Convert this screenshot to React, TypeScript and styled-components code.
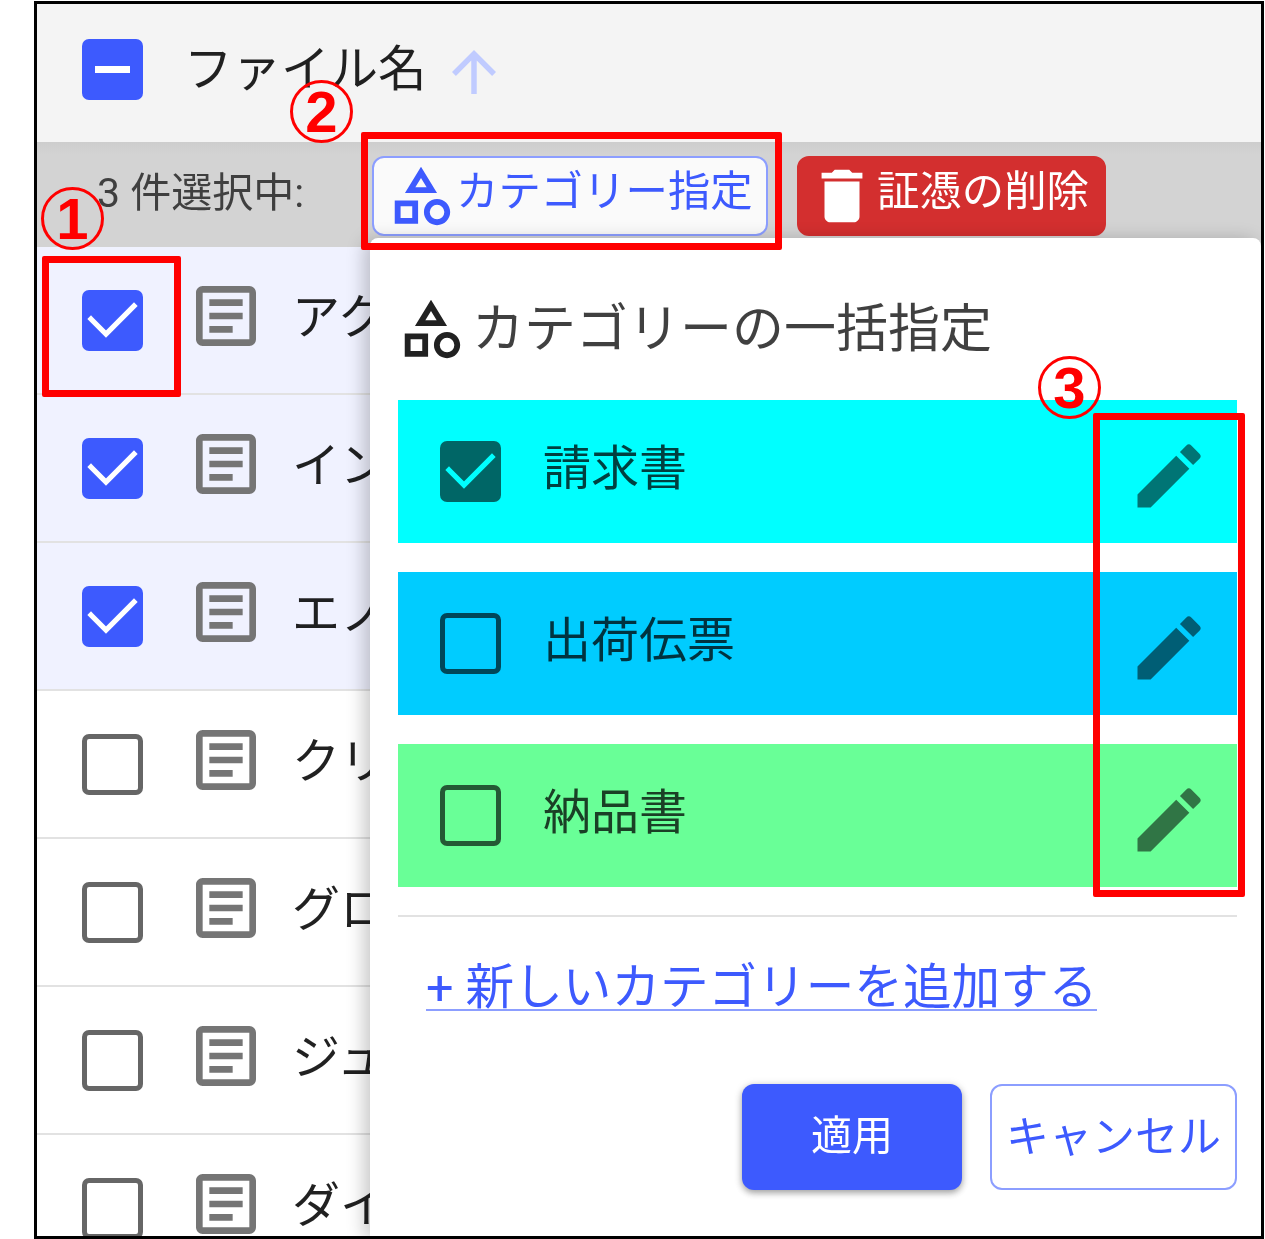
import React from 'react';
import styled, { createGlobalStyle } from 'styled-components';
import {
  MdArrowUpward,
  MdDelete,
  MdEdit,
  MdOutlineArticle,
  MdOutlineCategory,
} from 'react-icons/md';

const BLUE = '#3d5afe';
const FONT = `Roboto, "Noto Sans CJK JP", sans-serif`;

const GlobalStyle = createGlobalStyle`
  html, body {
    margin: 0;
    background: #fff;
    font-family: ${FONT};
  }
`;

const files = [
  { name: 'アクメ株式会社', selected: true },
  { name: 'インター商事', selected: true },
  { name: 'エノモト物産', selected: true },
  { name: 'クリエイト', selected: false },
  { name: 'グローバル', selected: false },
  { name: 'ジュピター', selected: false },
  { name: 'ダイヤ工業', selected: false },
];

const categories = [
  { name: '請求書', color: '#00ffff', checked: true },
  { name: '出荷伝票', color: '#00ccff', checked: false },
  { name: '納品書', color: '#69ff97', checked: false },
];

const Frame = styled.div`
  position: relative;
  box-sizing: border-box;
  width: 1230px;
  height: 1238px;
  margin: 1px 0 0 34px;
  border: 3px solid #000;
  overflow: hidden;
`;

const Sheet = styled.div`
  position: relative;
  height: 100%;
  filter: blur(0.55px);
  color: rgba(0, 0, 0, 0.87);
`;

const HeaderRow = styled.div`
  box-sizing: border-box;
  display: flex;
  align-items: center;
  height: 138px;
  padding: 0 0 7px 45px;
  background: #f4f4f4;
`;

const HeaderLabel = styled.span`
  margin-left: 41px;
  font-size: 48.5px;
  line-height: 60px;
`;

const SortArrow = styled(MdArrowUpward)`
  width: 66px;
  height: 66px;
  margin: 4px 0 0 14px;
  color: #c0cbff;
`;

const Toolbar = styled.div`
  box-sizing: border-box;
  display: flex;
  align-items: flex-start;
  height: 105px;
  padding: 14px 0 0 60px;
  background: linear-gradient(#cdcdcd, #d3d3d3 12px);
`;

const SelectedCount = styled.span`
  flex: none;
  width: 275px;
  font-size: 41px;
  line-height: 74px;
  color: rgba(0, 0, 0, 0.7);
  white-space: nowrap;
`;

const ToolButton = styled.button<{ $danger?: boolean; $width: number }>`
  box-sizing: border-box;
  display: flex;
  align-items: center;
  flex: none;
  width: ${({ $width }) => $width}px;
  height: 80px;
  padding: 0 0 0 ${({ $danger }) => ($danger ? 8 : 12)}px;
  border: 2px solid ${({ $danger }) => ($danger ? '#d32f2f' : '#8c9eff')};
  border-radius: 12px;
  background: ${({ $danger }) => ($danger ? '#d32f2f' : '#fafafa')};
  color: ${({ $danger }) => ($danger ? '#fff' : BLUE)};
  font-family: ${FONT};
  font-size: 42.4px;
  white-space: nowrap;

  & + & {
    margin-left: 29px;
  }

  svg {
    flex: none;
    width: 70px;
    height: 70px;
  }
`;

const ButtonLabel = styled.span`
  margin-bottom: 18px;
`;

const FileRow = styled.div<{ $selected: boolean }>`
  box-sizing: border-box;
  display: flex;
  align-items: flex-start;
  height: 148px;
  padding-left: 45px;
  border-bottom: 2px solid #e2e2e2;
  background: ${({ $selected }) => ($selected ? '#f0f2ff' : '#fff')};
`;

const DocIcon = styled(MdOutlineArticle)`
  flex: none;
  width: 80px;
  height: 80px;
  margin: 29px 0 0 43px;
  color: #757575;
`;

const FileName = styled.span`
  margin: 41px 0 0 26px;
  font-size: 48px;
  line-height: 60px;
  white-space: nowrap;
`;

const CheckBox = styled.span<{
  $fill?: string;
  $line: string;
  $top?: number;
}>`
  box-sizing: border-box;
  display: block;
  flex: none;
  width: 61px;
  height: 61px;
  margin-top: ${({ $top }) => $top ?? 0}px;
  border: ${({ $fill, $line }) => ($fill ? 'none' : `5px solid ${$line}`)};
  border-radius: 7px;
  background: ${({ $fill }) => $fill ?? 'transparent'};

  svg {
    display: block;
    width: 61px;
    height: 61px;
  }
`;

const CheckMark = ({ color }: { color: string }) => (
  <svg viewBox="0 0 61 61" fill="none">
    <polyline
      points="9,29 24,44 52,16"
      stroke={color}
      strokeWidth="5.2"
      strokeLinecap="square"
    />
  </svg>
);

const MinusMark = () => (
  <svg viewBox="0 0 61 61">
    <rect x="13" y="27" width="35" height="7" fill="#fff" />
  </svg>
);

const Popover = styled.div`
  position: absolute;
  top: 234px;
  right: 0;
  bottom: 0;
  left: 333px;
  box-sizing: border-box;
  padding: 56px 24px 0 28px;
  border-radius: 8px 8px 0 0;
  background: #fff;
  box-shadow: -6px 2px 18px rgba(0, 0, 0, 0.22);
`;

const PopoverTitle = styled.div`
  display: flex;
  align-items: center;
  height: 70px;
  margin-bottom: 36px;
  font-size: 52px;
  color: rgba(0, 0, 0, 0.75);
  white-space: nowrap;

  svg {
    flex: none;
    width: 70px;
    height: 70px;
    margin: 0 6px 0 -2px;
    color: rgba(0, 0, 0, 0.87);
  }

  span {
    margin-bottom: 10px;
  }
`;

const CategoryList = styled.div`
  display: flex;
  flex-direction: column;
  gap: 29px;
`;

const CategoryRow = styled.div<{ $color: string }>`
  display: flex;
  align-items: center;
  height: 143px;
  padding: 0 26px 0 42px;
  background: ${({ $color }) => $color};
`;

const CategoryName = styled.span`
  flex: 1;
  margin: 0 0 6px 42px;
  font-size: 48px;
  line-height: 60px;
  color: rgba(0, 0, 0, 0.75);
`;

const PencilIcon = styled(MdEdit)`
  width: 84px;
  height: 84px;
  margin-top: 8px;
  color: rgba(0, 0, 0, 0.54);
`;

const Divider = styled.hr`
  height: 2px;
  margin: 28px 0 0;
  border: none;
  background: #e2e2e2;
`;

const AddLink = styled.a`
  display: inline-block;
  height: 48px;
  margin: 44px 0 0 28px;
  border-bottom: 2px solid #8c9eff;
  color: ${BLUE};
  font-size: 48.6px;
  line-height: 54px;
  white-space: nowrap;
`;

const ActionRow = styled.div`
  display: flex;
  justify-content: flex-end;
  gap: 28px;
  margin-top: 73px;
`;

const ApplyButton = styled.button`
  width: 220px;
  height: 106px;
  padding: 0 0 10px;
  border: none;
  border-radius: 12px;
  background: ${BLUE};
  color: #fff;
  font-family: ${FONT};
  font-size: 41px;
  box-shadow:
    0 3px 6px rgba(0, 0, 0, 0.3),
    0 1px 10px rgba(0, 0, 0, 0.12);
`;

const CancelButton = styled.button`
  width: 247px;
  height: 106px;
  padding: 0 0 8px;
  border: 2px solid #8c9eff;
  border-radius: 12px;
  background: #fff;
  color: ${BLUE};
  font-family: ${FONT};
  font-size: 43px;
  white-space: nowrap;
`;

const Callout = styled.div<{
  $left: number;
  $top: number;
  $width: number;
  $height: number;
}>`
  position: absolute;
  box-sizing: border-box;
  left: ${({ $left }) => $left}px;
  top: ${({ $top }) => $top}px;
  width: ${({ $width }) => $width}px;
  height: ${({ $height }) => $height}px;
  border: 7px solid #ff0000;
  border-radius: 2px;
`;

const Marker = styled.div<{ $left: number; $top: number }>`
  position: absolute;
  box-sizing: border-box;
  left: ${({ $left }) => $left}px;
  top: ${({ $top }) => $top}px;
  display: flex;
  align-items: center;
  justify-content: center;
  width: 63px;
  height: 63px;
  border: 3px solid #ff0000;
  border-radius: 50%;
  color: #ff0000;
  font-family: "Liberation Sans", sans-serif;
  font-size: 58px;
  font-weight: 700;
  line-height: 1;
`;

const App = () => (
  <>
    <GlobalStyle />
    <Frame>
      <Sheet>
        <HeaderRow>
          <CheckBox $fill={BLUE} $line={BLUE}>
            <MinusMark />
          </CheckBox>
          <HeaderLabel>ファイル名</HeaderLabel>
          <SortArrow />
        </HeaderRow>
        <Toolbar>
          <SelectedCount>3 件選択中:</SelectedCount>
          <ToolButton $width={396}>
            <MdOutlineCategory />
            <ButtonLabel>カテゴリー指定</ButtonLabel>
          </ToolButton>
          <ToolButton $danger $width={309}>
            <MdDelete />
            <ButtonLabel>証憑の削除</ButtonLabel>
          </ToolButton>
        </Toolbar>
        {files.map((file) => (
          <FileRow key={file.name} $selected={file.selected}>
            <CheckBox
              $top={43}
              $fill={file.selected ? BLUE : undefined}
              $line="#666"
            >
              {file.selected && <CheckMark color="#fff" />}
            </CheckBox>
            <DocIcon />
            <FileName>{file.name}</FileName>
          </FileRow>
        ))}
        <Popover>
          <PopoverTitle>
            <MdOutlineCategory />
            <span>カテゴリーの一括指定</span>
          </PopoverTitle>
          <CategoryList>
            {categories.map((category) => (
              <CategoryRow key={category.name} $color={category.color}>
                <CheckBox
                  $fill={category.checked ? 'rgba(0, 0, 0, 0.6)' : undefined}
                  $line="rgba(0, 0, 0, 0.65)"
                >
                  {category.checked && <CheckMark color={category.color} />}
                </CheckBox>
                <CategoryName>{category.name}</CategoryName>
                <PencilIcon />
              </CategoryRow>
            ))}
          </CategoryList>
          <Divider />
          <AddLink>+ 新しいカテゴリーを追加する</AddLink>
          <ActionRow>
            <ApplyButton>適用</ApplyButton>
            <CancelButton>キャンセル</CancelButton>
          </ActionRow>
        </Popover>
      </Sheet>
      <Callout $left={5} $top={252} $width={139} $height={141} />
      <Callout $left={324} $top={128} $width={421} $height={118} />
      <Callout $left={1056} $top={409} $width={152} $height={484} />
      <Marker $left={4} $top={183}>1</Marker>
      <Marker $left={253} $top={76}>2</Marker>
      <Marker $left={1001} $top={352}>3</Marker>
    </Frame>
  </>
);

export default App;
